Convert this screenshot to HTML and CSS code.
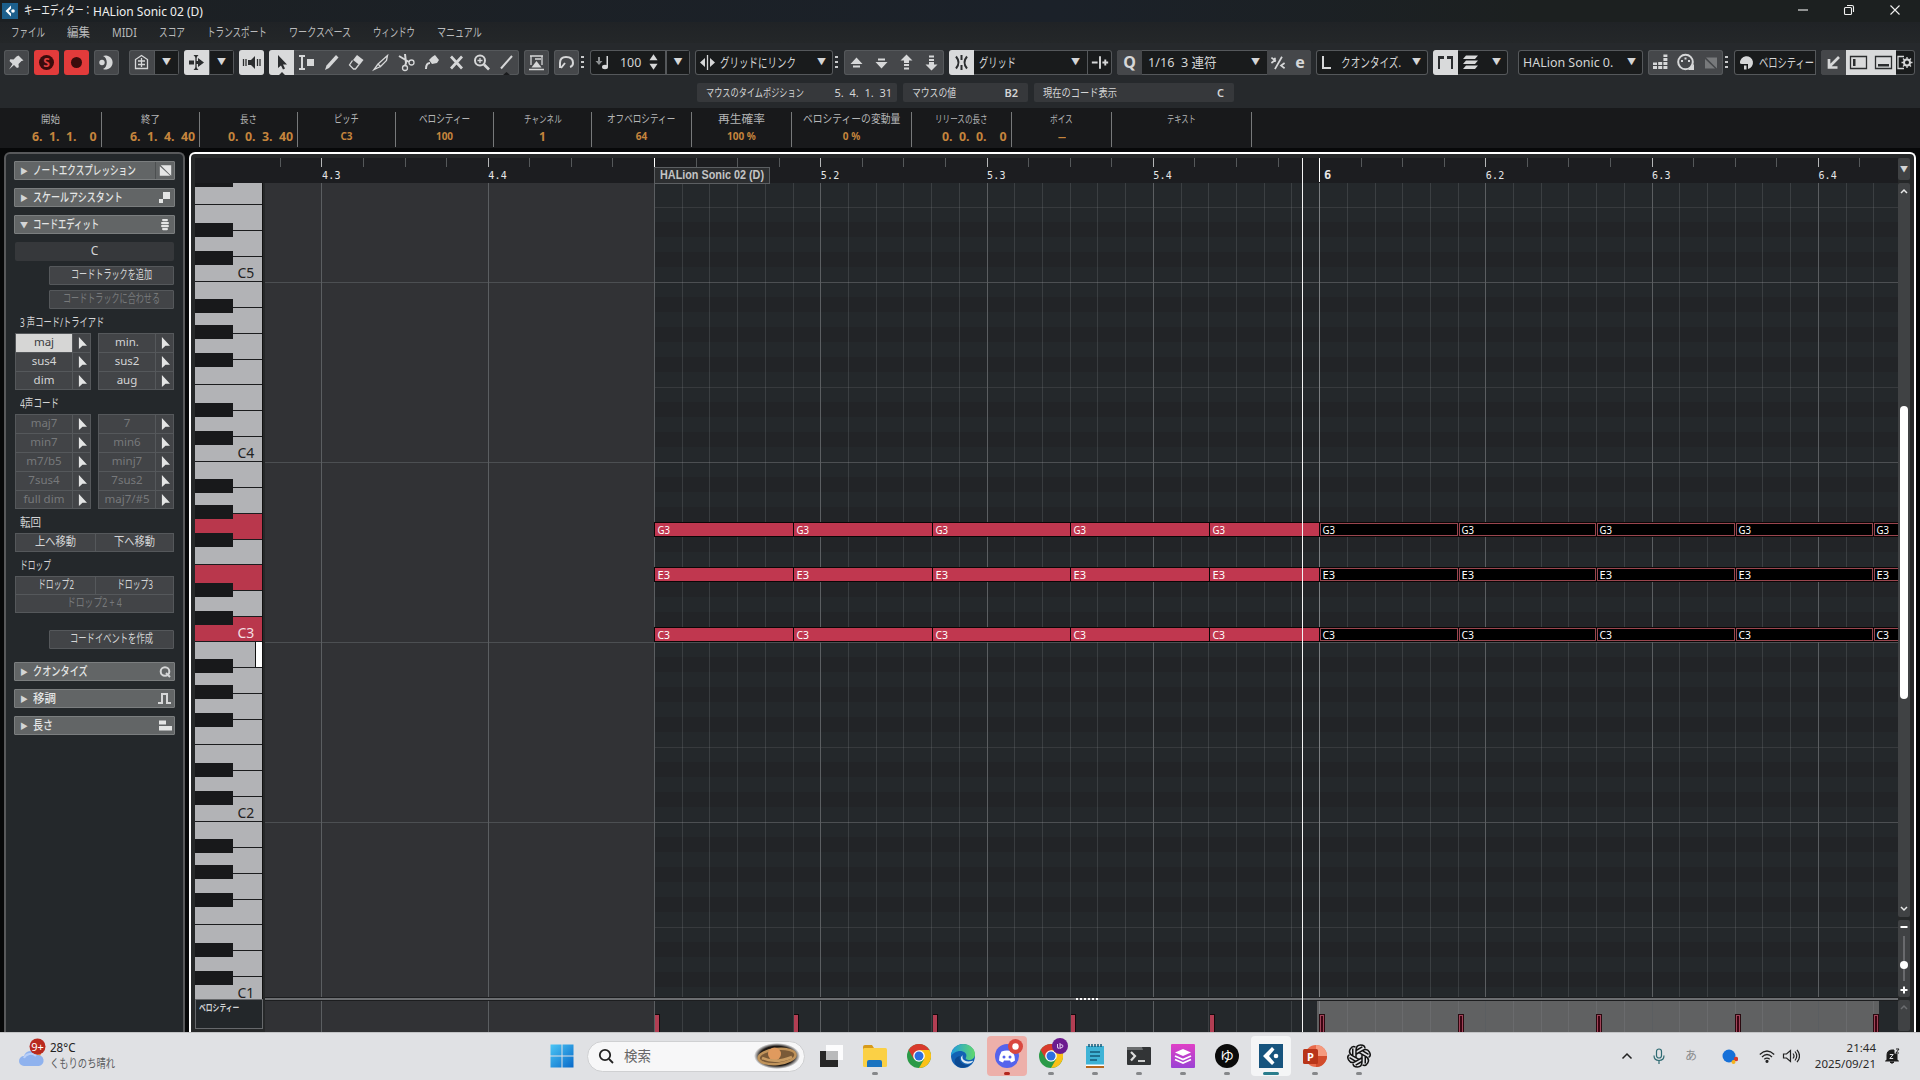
FILE: index.html
```html
<!DOCTYPE html>
<html lang="ja">
<head>
    <meta charset="UTF-8">
    <meta name="viewport" content="width=device-width, initial-scale=1.0">
    <title>キーエディター： HALion Sonic 02 (D)</title>
    <link rel="stylesheet" href="styles.css">
</head>
<body>

    <header class="titlebar">
        <svg class="app-icon" viewBox="0 0 16 16"><rect width="16" height="16" fill="#1c5f8c"/><path d="M9 2.500 3.500 8 9 13.500V10.500L6.500 8 9 5.500z" fill="#fff"/><circle cx="11" cy="8" r="1.800" fill="#fff"/></svg>
        <span data-w="68">キーエディター：</span>
        <span class="title-name" data-w="110">HALion Sonic 02 (D)</span>
        <div class="win-buttons">
            <svg viewBox="0 0 12 12"><path d="M1 6h10"/></svg>
            <svg viewBox="0 0 12 12"><rect x="1.500" y="3.500" width="7" height="7" rx="1"/><path d="M4 1.500h5q1.500 0 1.500 1.500v5"/></svg>
            <svg viewBox="0 0 12 12"><path d="M1.500 1.500l9 9M10.500 1.500l-9 9"/></svg>
        </div>
    </header>

    <nav class="menubar">
        <span data-w="34">ファイル</span>
        <span data-w="23">編集</span>
        <span data-w="25">MIDI</span>
        <span data-w="26">スコア</span>
        <span data-w="60">トランスポート</span>
        <span data-w="62">ワークスペース</span>
        <span data-w="42">ウィンドウ</span>
        <span data-w="45">マニュアル</span>
    </nav>

    <div class="toolbar">
        <div class="group g5"><i class="btn"><svg viewBox="0 0 25 25"><path d="M14.500 5.500l5 5-2 .5-3 3 .3 3.200-1.800.8-3-3L5 19.500l3.500-5.500-3-3 .8-1.800 3.200.3 3-3z"/></svg></i></div>
        <div class="group g5 red"><i class="btn"><svg viewBox="0 0 25 25"><circle cx="12.500" cy="12.500" r="7.500" fill="#3a0c0c"/><text x="12.500" y="17" text-anchor="middle" font-size="12" font-weight="bold" fill="#e04040">S</text></svg></i></div>
        <div class="group g5 red"><i class="btn"><svg viewBox="0 0 25 25"><circle cx="12.500" cy="12.500" r="5.500" fill="#3a0c0c"/></svg></i></div>
        <div class="group g10"><i class="btn"><svg viewBox="0 0 25 25"><path d="M9 6a7 7 0 1 1 0 13c5-2 5-11 0-13z"/><circle cx="8" cy="12.500" r="2.700"/></svg></i></div>
        <div class="group g5"><i class="btn"><svg viewBox="0 0 25 25"><path class="ln" d="M6.500 18.500v-9l6-4 6 4v9zM12.500 8v9M9 11h7M9 14.500h7"/></svg></i><i class="btn dark">▼</i></div>
        <div class="group g5"><i class="btn lit"><svg viewBox="0 0 25 25"><path d="M5 10.500h5v4H5zM14 8l6 4.500-6 4.500v-3h-2v-3h2z"/><path class="ln" d="M12 5v15"/><path d="M9.500 5h5L12 8zM9.500 20h5L12 17z"/></svg></i><i class="btn dark">▼</i></div>
        <div class="group g5"><i class="btn lit"><svg viewBox="0 0 25 25"><path d="M9 10h3l4-4v13l-4-4H9z"/><path class="ln" d="M4.500 9v7M7 9v7M18.500 9v7M21 9v7"/></svg></i></div>
        <div class="group g5">
            <i class="btn lit"><svg viewBox="0 0 25 25"><path d="M9 5v13l3-2.500 2 4 2-1-2-4h4zM10 25l3-3 3 3z"/></svg></i>
            <i class="btn"><svg viewBox="0 0 25 25"><path class="ln2" d="M5 6h6M8 6v13M5 19h6"/><path d="M13 9h7v7h-7z"/></svg></i>
            <i class="btn"><svg viewBox="0 0 25 25"><path d="M17 5l2.500 2.500L10 18l-4 2 1.500-4.500z"/></svg></i>
            <i class="btn"><svg viewBox="0 0 25 25"><path d="M13 5l6.500 5-4 5L9 10z"/><path class="ln" d="M8.500 10.500l-3 4.500 4 4h2l3.500-4.500"/></svg></i>
            <i class="btn"><svg viewBox="0 0 25 25"><path class="ln" d="M18.500 5.500L9 14l2.500 2.500 6-6zM9 14l-4 5.500 6.500-3"/></svg></i>
            <i class="btn"><svg viewBox="0 0 25 25"><path class="ln2" d="M5 6l10 6M11 4l1 9-1 3"/><circle class="ln" cx="17.500" cy="12.500" r="2.500"/><circle class="ln" cx="11" cy="18" r="2.500"/></svg></i>
            <i class="btn"><svg viewBox="0 0 25 25"><path d="M13 7l3-2 4 5-2 3-5 1-3-4z"/><path class="ln2" d="M11 13q-4 0-4 6"/></svg></i>
            <i class="btn"><svg viewBox="0 0 25 25"><path class="ln3" d="M7 6.500l11 12M18 6.500l-11 12"/></svg></i>
            <i class="btn"><svg viewBox="0 0 25 25"><circle class="ln2" cx="11" cy="10.500" r="5"/><path class="ln3" d="M15 14.500l5 5"/><path class="ln" d="M8.500 10.500h5M11 8v5"/></svg></i>
            <i class="btn"><svg viewBox="0 0 25 25"><path class="ln2" d="M18 6L7 18.500"/><path d="M9 25l3.500-3 3.500 3z" fill="#1a1b1d"/></svg></i>
        </div>
        <div class="group g5"><i class="btn"><svg viewBox="0 0 25 25"><path class="ln" d="M6 6h13M7 6v9M18 6v9M5 19.500h15M11 9h6"/><path d="M12.500 11l5 6.500h-10z"/></svg></i></div>
        <div class="group"><i class="btn"><svg viewBox="0 0 25 25"><path class="ln2" d="M6 18v-5q0-6 6-6 7 0 7 6 0 3-3 4M7 18l4-5"/></svg></i></div>
        <b class="dots g6"></b>
        <div class="group box g5 w100">
            <i class="btn"><svg viewBox="0 0 25 25"><path d="M16.500 6h1.500v11h-1.500z"/><ellipse cx="15" cy="17" rx="3" ry="2.200"/><path d="M8 7h2v4h2.500L9 15l-3.500-4H8z" fill="#8d9092"/></svg></i>
            <span class="num" data-w="21">100</span>
            <svg class="spin" viewBox="0 0 10 17"><path d="M5 0l4.500 6.500h-9zM5 17L.5 10.500h9z"/></svg><i class="btn dark sep">▼</i>
        </div>
        <div class="group box w138">
            <i class="btn"><svg viewBox="0 0 25 25"><path class="ln" d="M12.500 5v15"/><path d="M10 8v9l-5-4.500zM15 8v9l5-4.500z"/></svg></i>
            <span data-w="76">グリッドにリンク</span><i class="arrow">▼</i>
        </div>
        <b class="dots g6"></b>
        <div class="group g5">
            <i class="btn"><svg viewBox="0 0 25 25"><path d="M12.500 7.500l6 6.500h-12zM9 15.500h7v2H9z"/></svg></i>
            <i class="btn"><svg viewBox="0 0 25 25"><path d="M12.500 18.500L6.500 12h12zM9 8.500h7v2H9z"/></svg></i>
            <i class="btn"><svg viewBox="0 0 25 25"><path d="M12.500 4.500l6 6h-3.500V13h-5v-2.500H6.500zM10 14h5v2h-5zM10 17.500h5v2h-5z"/></svg></i>
            <i class="btn"><svg viewBox="0 0 25 25"><path d="M12.500 20.500l6-6h-3.500V12h-5v2.500H6.500zM10 9h5v2h-5zM10 5.500h5v2h-5z"/></svg></i>
        </div>
        <div class="group box g5 w163">
            <i class="btn lit"><svg viewBox="0 0 25 25"><path class="ln2" d="M12.500 5v5M12.500 15v5M7 6.500q5 6 0 12M18 6.500q-5 6 0 12"/></svg></i>
            <span class="pad5" data-w="37">グリッド</span><i class="arrow">▼</i>
            <i class="btn sep"><svg viewBox="0 0 25 25"><path class="ln2" d="M12.500 6v13M4 12.500h6M15 12.500h6M18 9.500v6"/></svg></i>
        </div>
        <div class="group box g5 w194">
            <i class="btn mid"><b class="q">Q</b></i><span class="pad6" data-w="69">1/16&nbsp; 3 連符</span><i class="arrow">▼</i>
            <i class="btn mid w22"><svg viewBox="0 0 25 25"><path class="ln2" d="M17 6L9 20M5 7l4 3-4 3M9 7v5M20 13l-4 3 4 3"/></svg></i><i class="btn mid w22"><b class="q">e</b></i>
        </div>
        <div class="group box g5 w113">
            <i class="btn"><svg viewBox="0 0 25 25"><path class="ln2" d="M7 6v12h8"/></svg></i><span data-w="60">クオンタイズ.</span><i class="arrow">▼</i>
        </div>
        <div class="group box g10 w75">
            <i class="btn lit"><svg viewBox="0 0 25 25"><path d="M5 6h6v3H7v10H5zM14 6h6v13h-2V9h-4z"/></svg></i>
            <i class="btn"><svg viewBox="0 0 25 25"><path d="M8 5.500h12l-3 3.500H5zM8 10.500h12L17 14H5zM8 15.500h12L17 19H5z"/></svg></i><i class="arrow">▼</i>
        </div>
        <div class="group box g5 w125"><span class="pad5" data-w="90">HALion Sonic 0.</span><i class="arrow">▼</i></div>
        <div class="group">
            <i class="btn"><svg viewBox="0 0 25 25"><path d="M5 16h4v3H5zM10.200 16h4v3h-4zM15.400 16h4v3h-4zM10.200 12h4v3h-4zM15.400 12h4v3h-4zM15.400 8h4v3h-4zM15.400 4.500h4v2.500h-4zM5 12.500h4V15H5z"/></svg></i>
            <i class="btn"><svg viewBox="0 0 25 25"><circle class="ln2" cx="12.500" cy="12" r="7.300"/><path d="M8 10h2v2H8zM11.500 7.500h2v2h-2zM15 10h2v2h-2zM15 20h6v-6z"/></svg></i>
            <i class="btn"><svg viewBox="0 0 25 25"><path class="dim" d="M8 7.500h11v11zM7 9v9.500h10z"/></svg></i>
        </div>
        <b class="dots g6"></b>
        <div class="group box open g5 w82">
            <i class="btn"><svg viewBox="0 0 25 25"><path d="M6 13a6.500 6.500 0 1 1 8 6v-5H8q-2 0-2-1zM10 15.500h2.500v4H10z"/></svg></i><span data-w="55">ベロシティー</span>
        </div>
        <div class="group box w94">
            <i class="btn mid"><svg viewBox="0 0 25 25"><path class="ln3" d="M18 7l-9 9M8 9v8.500h8.500"/></svg></i>
            <i class="btn lit"><svg viewBox="0 0 25 25"><path class="ln" d="M4.500 6.500h16v12h-16z"/><path d="M7 9h2.500v7H7z"/></svg></i>
            <i class="btn lit"><svg viewBox="0 0 25 25"><path class="ln" d="M4.500 6.500h16v12h-16z"/><path d="M7 14h11v2.500H7z"/></svg></i>
            <i class="btn w19"><svg viewBox="3 0 19 25"><path class="ln" d="M11 6.500H5v12h6"/><circle class="ln2" cx="14" cy="12.500" r="3"/><path class="ln" d="M14 7v2M14 16v2M8.500 12.500h2M17.500 12.500h2M10 8.500l1.500 1.500M18 8.500l-1.500 1.500M10 16.500l1.500-1.500M18 16.500L16.500 15"/></svg></i>
        </div>
    </div>

    <div class="status">
        <div class="cell c1"><span data-w="98">マウスのタイムポジション</span><span data-w="57">5.&nbsp; 4.&nbsp; 1.&nbsp; 31</span></div>
        <div class="cell c2"><span data-w="44">マウスの値</span><b>B2</b></div>
        <div class="cell c1"><span data-w="74">現在のコード表示</span><b>C</b></div>
    </div>

    <div class="infoline">
        <div class="info w101 time"><span class="s" data-w="19">開始</span><b data-w="65">6.&nbsp; 1.&nbsp; 1.&nbsp;&nbsp;&nbsp; 0</b></div>
        <div class="info w98 time"><span class="s" data-w="19">終了</span><b data-w="65">6.&nbsp; 1.&nbsp; 4.&nbsp; 40</b></div>
        <div class="info w98 time"><span class="s" data-w="17">長さ</span><b data-w="65">0.&nbsp; 0.&nbsp; 3.&nbsp; 40</b></div>
        <div class="info w98"><span data-w="25">ピッチ</span><b>C3</b></div>
        <div class="info w98"><span data-w="51">ベロシティー</span><b>100</b></div>
        <div class="info w98"><span class="s" data-w="38">チャンネル</span><b class="one">1</b></div>
        <div class="info w100"><span data-w="68">オフベロシティー</span><b>64</b></div>
        <div class="info w100"><span data-w="47">再生確率</span><b>100 %</b></div>
        <div class="info w120"><span data-w="97">ベロシティーの変動量</span><b>0 %</b></div>
        <div class="info w100 time"><span class="s" data-w="53">リリースの長さ</span><b data-w="65">0.&nbsp; 0.&nbsp; 0.&nbsp;&nbsp;&nbsp; 0</b></div>
        <div class="info w100"><span class="s" data-w="23">ボイス</span><b data-w="8">—</b></div>
        <div class="info w140"><span class="s" data-w="29">テキスト</span></div>
    </div>

    <main class="workspace">
        <aside class="inspector">
            <div class="section"><i>▶</i><b data-w="103">ノートエクスプレッション</b><svg class="cut" viewBox="0 0 20 17"><path d="M5 3h11v11zM4 4v10h11z"/></svg></div>
            <div class="section"><i>▶</i><b data-w="90">スケールアシスタント</b><svg viewBox="0 0 20 17"><path d="M8 3h7v7H8zM4 10h4v4H4z"/></svg></div>
            <div class="section"><i class="down">▼</i><b data-w="66">コードエディット</b><svg viewBox="0 0 20 17"><rect x="7" y="3" width="6" height="2.200" rx="1.100"/><rect x="6" y="6" width="8" height="2.200" rx="1.100"/><rect x="6" y="9" width="8" height="2.200" rx="1.100"/><rect x="7" y="12" width="6" height="2.200" rx="1.100"/></svg></div>

            <div class="chord-name">C</div>
            <div class="wide"><span data-w="81">コードトラックを追加</span></div>
            <div class="wide off"><span data-w="97">コードトラックに合わせる</span></div>

            <h4><span data-w="84">3 声コード/トライアド</span></h4>
            <div class="chords">
                <div class="chord on"><span>maj</span><i></i></div><div class="chord"><span>min.</span><i></i></div>
                <div class="chord"><span>sus4</span><i></i></div><div class="chord"><span>sus2</span><i></i></div>
                <div class="chord"><span>dim</span><i></i></div><div class="chord"><span>aug</span><i></i></div>
            </div>
            <h4><span data-w="39">4声コード</span></h4>
            <div class="chords off">
                <div class="chord"><span>maj7</span><i></i></div><div class="chord"><span>7</span><i></i></div>
                <div class="chord"><span>min7</span><i></i></div><div class="chord"><span>min6</span><i></i></div>
                <div class="chord"><span>m7/b5</span><i></i></div><div class="chord"><span>minj7</span><i></i></div>
                <div class="chord"><span>7sus4</span><i></i></div><div class="chord"><span>7sus2</span><i></i></div>
                <div class="chord"><span>full dim</span><i></i></div><div class="chord"><span>maj7/#5</span><i></i></div>
            </div>
            <h4><span data-w="21">転回</span></h4>
            <div class="pair"><div><span data-w="41">上へ移動</span></div><div><span data-w="41">下へ移動</span></div></div>
            <h4><span data-w="31">ドロップ</span></h4>
            <div class="pair"><div><span data-w="36">ドロップ2</span></div><div><span data-w="36">ドロップ3</span></div><div class="full"><span data-w="55">ドロップ2 + 4</span></div></div>
            <div class="wide create"><span data-w="83">コードイベントを作成</span></div>

            <div class="section"><i>▶</i><b data-w="55">クオンタイズ</b><svg viewBox="0 0 20 17"><circle class="ln2" cx="10" cy="8.500" r="4.300"/><path class="ln2" d="M11 10l4 4"/></svg></div>
            <div class="section"><i>▶</i><b data-w="23">移調</b><svg viewBox="0 0 20 17"><path class="ln2" d="M3 13h4V4h5v9h4"/></svg></div>
            <div class="section"><i>▶</i><b data-w="20">長さ</b><svg viewBox="0 0 20 17"><path d="M4 3.500h7v4H4zM4 9h13v4.500H4z"/></svg></div>
        </aside>

        <section class="editor">
            <div class="keys-col">
                <div class="ruler-pad"></div>
                <svg id="keys" class="keys" viewBox="195 183 68 816"></svg>
                <div class="lane-name"><span data-w="40">ベロシティー</span></div>
            </div>
            <svg id="roll" class="roll" viewBox="265 158 1633 874"></svg>
            <div class="scroll-col">
                <div class="sb menu">▼</div>
                <div class="sb track">
                    <svg viewBox="0 0 12 12"><path d="M3 8l3-3 3 3"/></svg>
                    <div class="thumb"></div>
                    <svg viewBox="0 0 12 12"><path d="M3 4l3 3 3-3"/></svg>
                </div>
                <div class="sb zoom"><svg viewBox="0 0 12 77"><path d="M6 16v45" stroke="#77797b"/><path d="M2.500 7h7M2.500 70h7M6 66.500v7" stroke="#fff" stroke-width="2"/><circle cx="6" cy="45" r="4" fill="#fff" stroke="none"/></svg></div>
                <div class="sb lane"><svg viewBox="0 0 12 12"><path d="M3 8l3-3 3 3" stroke="#6b6d70"/></svg></div>
            </div>
        </section>
    </main>

    <footer class="taskbar">
        <div class="weather">
            <svg viewBox="0 0 30 32"><circle cx="18" cy="15" r="5" fill="#e98a3a"/><path d="M6 28a5 5 0 0 1 0-10 7 7 0 0 1 13-1 5.500 5.500 0 0 1 2 11z" fill="#8fb2ee"/><path d="M6 20a7 6 0 0 1 12-2" fill="none" stroke="#b9cff7" stroke-width="2"/><circle cx="19.500" cy="8.500" r="8" fill="#b92a1f"/><text x="19.500" y="12.500" text-anchor="middle" font-size="11" fill="#fff">9+</text></svg>
            <div><p class="temp"><span data-w="25">28°C</span></p><p><span data-w="65">くもりのち晴れ</span></p></div>
        </div>

        <div class="apps">
            <i class="app start"><svg viewBox="0 0 24 24"><defs><linearGradient id="win" x1="0" y1="0" x2="1" y2="1"><stop offset="0" stop-color="#4cc6f5"/><stop offset="1" stop-color="#0869c9"/></linearGradient></defs><path fill="url(#win)" d="M.5.500h11v11H.5zM12.500.500h11v11h-11zM.5 12.500h11v11H.5zM12.500 12.500h11v11h-11z"/></svg></i>
            <div class="search">
                <svg viewBox="0 0 16 16"><circle cx="7" cy="7" r="5.200"/><path d="M11 11l4 4"/></svg><span>検索</span>
                <svg class="planet" viewBox="0 0 46 26"><defs><radialGradient id="sky"><stop offset=".75" stop-color="#1c1714"/><stop offset="1" stop-color="#1c1714" stop-opacity="0"/></radialGradient></defs><ellipse cx="23" cy="13" rx="23" ry="13" fill="url(#sky)"/><ellipse cx="23" cy="13.500" rx="18.500" ry="7.500" fill="#7a5a38" stroke="#c0935a" stroke-width="2.500" transform="rotate(-6 23 13)"/><circle cx="20.500" cy="11" r="6.500" fill="#e09a5e"/><path d="M8 15q13 6 30-1" fill="none" stroke="#c99c63" stroke-width="2.500"/></svg>
            </div>
            <i class="app"><svg viewBox="0 0 24 24"><path d="M1 7h18v16H1z" fill="#262626"/><path d="M7 1h17v15H7z" fill="#fff" opacity=".9"/><path d="M7 7h12v9H7z" fill="#b9babb"/></svg></i>
            <i class="app run"><svg viewBox="0 0 24 24"><path d="M0 3q0-2 2-2h7l2 3v5H0z" fill="#d79a1b"/><rect y="4" width="24" height="19" rx="1.500" fill="#fbd045"/><path d="M4 23v-5q0-2 2-2h11q2 0 2 2v5z" fill="#1a73c0"/></svg></i>
            <i class="app"><svg viewBox="0 0 24 24"><use href="#chrome"/></svg></i>
            <i class="app"><svg viewBox="0 0 24 24"><defs><linearGradient id="edge"><stop offset="0" stop-color="#1f9be0"/><stop offset="1" stop-color="#62d96b"/></linearGradient></defs><circle cx="12" cy="12" r="12" fill="#1362b4"/><path d="M0 12C0 5 6 0 12 0c7 0 12 5 12 10 0 4-3 6-6 6-2 0-4-1-3-2.500C17 9 12 6.500 8 7c-4 .5-7 3-8 5z" fill="url(#edge)"/><path d="M9 12c-2 6 4 11 11 8-4 4-10 5-14 2s-3-9 3-10z" fill="#0c4a92"/><path d="M12 11c-2 3 1 8 9 6 2-1 1 1-1 2-5 2-11-1-10-6z" fill="#dce9f2"/></svg></i>
            <i class="app run alert"><svg viewBox="0 0 24 24"><circle cx="12" cy="12" r="12" fill="#5563ec"/><path d="M6.500 7.500q5.500-2 11 0 2.500 4 2.500 9-2 1.500-4 2l-1-2H9l-1 2q-2-.5-4-2 0-5 2.500-9z" fill="#fff"/><circle cx="9" cy="13" r="1.500" fill="#5563ec"/><circle cx="15" cy="13" r="1.500" fill="#5563ec"/></svg><svg class="badge" viewBox="0 0 14 14"><circle cx="7" cy="7" r="7" fill="#d9473f"/><circle cx="7" cy="7" r="3" fill="#fff"/></svg></i>
            <i class="app run"><svg viewBox="0 0 24 24"><g id="chrome"><circle cx="12" cy="12" r="12" fill="#2b9a47"/><path d="M1.600 6A12 12 0 0 1 22.400 6L12 6.500 6.800 15z" fill="#d93a2c"/><path d="M22.400 6A12 12 0 0 1 12 24l5.200-9L12 6z" fill="#fbc116"/><circle cx="12" cy="12" r="5.800" fill="#fff"/><circle cx="12" cy="12" r="4.500" fill="#2d6fe0"/></g></svg><svg class="badge" viewBox="0 0 16 16"><circle cx="8" cy="8" r="8" fill="#6c1b8f"/><path d="M5.500 6v3q0 2 1.500 1M8 5v6M8 7q3-1 3 1t-3 2" fill="none" stroke="#e5cdf0"/></svg></i>
            <i class="app run"><svg viewBox="0 0 24 24"><rect x="3" y="2" width="18" height="21" fill="#3fb3d6"/><path d="M3 21h18v3H3z" fill="#b8681e"/><path d="M3 20.500h18V22H3z" fill="#fff"/><path d="M6 0v3M9 0v3M12 0v3M15 0v3M18 0v3M7 8h10M7 12h10M7 16h7" stroke="#155a78" stroke-width="1.500"/></svg></i>
            <i class="app run"><svg viewBox="0 0 24 24"><rect y="3" width="24" height="18" rx="1" fill="#323436"/><path d="M0 6V4q0-1 1-1h14l1 3z" fill="#6a6c6e"/><path d="M4 8l4 4-4 4.500" fill="none" stroke="#ddd" stroke-width="2.200"/><path d="M11 17h7" stroke="#fff" stroke-width="1.500"/></svg></i>
            <i class="app run"><svg viewBox="0 0 24 24"><defs><linearGradient id="lay" x2="0" y2="1"><stop offset="0" stop-color="#e040c6"/><stop offset="1" stop-color="#9a42d4"/></linearGradient></defs><rect width="24" height="24" rx="1" fill="url(#lay)"/><path d="M12 5l8 3.500-8 3.500-8-3.500z" fill="#fff"/><path d="M4 12l8 3.500 8-3.500M4 15.500L12 19l8-3.500" fill="none" stroke="#fff" stroke-width="1.800"/></svg></i>
            <i class="app run"><svg viewBox="0 0 24 24"><circle cx="12" cy="12" r="12" fill="#0b0b0b"/><text x="12" y="17" text-anchor="middle" font-size="14" fill="#fff">ゆ</text></svg></i>
            <i class="app run active"><svg viewBox="0 0 24 24"><rect width="24" height="24" fill="#17547e"/><path d="M13 3L4 12l9 9 2.500-2.500L10 12l5.500-6.500z" fill="#fff"/><circle cx="17" cy="12" r="2.300" fill="#fff"/></svg></i>
            <i class="app run"><svg viewBox="0 0 24 24"><circle cx="13" cy="12" r="11" fill="#e8694a"/><path d="M13 1a11 11 0 0 1 11 11H13z" fill="#f59a7e"/><path d="M13 23a11 11 0 0 0 11-11H13z" fill="#d24c2c"/><rect y="5" width="15" height="15" rx="1.500" fill="#b93519"/><text x="7.500" y="16.500" text-anchor="middle" font-size="11" font-weight="bold" fill="#fff">P</text></svg></i>
            <i class="app run"><svg viewBox="0 0 24 24"><g fill="none" stroke="#111" stroke-width="1.500"><path id="pt" d="M9 13.700V6.500Q9 1 13.500 1T18 4.500M9 6.500l6.300-3.600"/><use href="#pt" transform="rotate(60 12 12)"/><use href="#pt" transform="rotate(120 12 12)"/><use href="#pt" transform="rotate(180 12 12)"/><use href="#pt" transform="rotate(240 12 12)"/><use href="#pt" transform="rotate(300 12 12)"/></g></svg></i>
        </div>

        <div class="tray">
            <svg viewBox="0 0 16 16"><path d="M3.500 10.500L8 6l4.500 4.500" stroke-width="1.500"/></svg>
            <svg viewBox="0 0 16 16" class="mic"><rect x="5.500" y="1" width="5" height="9" rx="2.500"/><path d="M3 7.500q0 5 5 5t5-5M8 12.500V16"/></svg>
            <span class="ime">あ</span>
            <svg viewBox="0 0 16 16" class="ball"><circle cx="7" cy="8" r="6.500" fill="#1670d8" stroke="none"/><circle cx="14" cy="11" r="2.200" fill="#d83a2b" stroke="none"/><circle cx="11.500" cy="14" r="2" fill="#f5b31a" stroke="none"/></svg>
            <svg viewBox="0 0 16 16" class="wifi"><path d="M.8 6.500q7.200-7 14.400 0M3 9q5-5 10 0M5.300 11.300q2.700-2.500 5.400 0"/><circle cx="8" cy="13.300" r="1" fill="#222"/></svg>
            <svg viewBox="0 0 18 16" class="vol"><path d="M1.500 6h3L8.500 2.500v11L4.500 10h-3zM11 5.500q2 2.500 0 5M13 3.500q3.500 4.500 0 9M15 1.800q5 6.200 0 12.400"/></svg>
            <div class="clock"><p>21:44</p><p>2025/09/21</p></div>
            <svg viewBox="0 0 16 16" class="bell"><path d="M3 12V7q0-4.500 4.500-5H10v4h3v6l1.500 1H1.500zM6 14h4q-2 2.500-4 0z" fill="#1c1c1c"/><path d="M5.800 6.500h3.400l-3.400 4h3.400" stroke="#e0e1e4"/><path d="M12 1h3l-3 4h3"/></svg>
        </div>
    </footer>

    <script src="script.js"></script>
</body>
</html>
```
FILE: styles.css
```css
* {
    box-sizing: border-box;
}
body {
    margin: 0;
    width: 1920px;
    height: 1080px;
    overflow: hidden;
    background: #232629;
    color: #d4d5d6;
    font-family: "Noto Sans", "Noto Sans CJK JP", sans-serif;
    font-size: 12px;
    line-height: 16px;
    display: flex;
    flex-direction: column;
}
p, h4 {
    margin: 0;
    font-weight: normal;
}
i {
    font-style: normal;
}
svg {
    display: block;
}
[data-w] {
    display: inline-block;
    white-space: nowrap;
    transform-origin: 0 50%;
}

/* title + menu */
.titlebar {
    height: 22px;
    padding: 0 19px 0 2px;
    display: flex;
    align-items: center;
    background: linear-gradient(90deg, #1c2023, #1b2129 55%, #1c2020 80%);
    color: #f0f0f0;
}
.app-icon {
    width: 16px;
    height: 16px;
    margin: 0 6px 0 0;
}
.title-name {
    margin-left: 1px;
    font-size: 13px;
}
.win-buttons {
    margin-left: auto;
    display: flex;
    gap: 34px;
}
.win-buttons svg {
    width: 12px;
    height: 12px;
    margin-top: -3px;
    fill: none;
    stroke: #f0f0f0;
    stroke-width: 1.1;
}
.menubar {
    height: 21px;
    padding-left: 11px;
    display: flex;
    align-items: center;
    gap: 22px;
    background: linear-gradient(#202326, #242729);
    color: #b9babb;
}

/* toolbar */
.toolbar {
    height: 39px;
    padding: 0 0 1px 4px;
    display: flex;
    align-items: center;
    background: #26292c;
    flex: none;
    font-size: 13px;
}
.group {
    height: 25px;
    flex: none;
    display: flex;
    align-items: center;
    background: #45474a;
    border-radius: 3px;
    overflow: hidden;
    box-shadow: inset 0 0 0 1px #55585b;
}
.group.box {
    background: #191b1c;
}
.group.open {
    border-radius: 3px 0 0 3px;
}
.group.red {
    background: #e23b3b;
    box-shadow: none;
}
.g5 { margin-right: 5px; }
.g6 { margin-right: 6px; }
.g10 { margin-right: 10px; }
.w75 { width: 75px; }
.w82 { width: 82px; }
.w94 { width: 94px; }
.w98 { width: 98px; }
.w100 { width: 100px; }
.w101 { width: 102px; }
.w113 { width: 112px; }
.w120 { width: 120px; }
.w125 { width: 125px; }
.w138 { width: 138px; }
.w140 { width: 140px; }
.w163 { width: 163px; }
.w194 { width: 194px; }
.btn {
    width: 25px;
    height: 25px;
    flex: none;
    display: flex;
    align-items: center;
    justify-content: center;
    color: #d6d7d8;
    font-size: 9px;
}
.btn svg {
    width: 100%;
    height: 25px;
    fill: #d6d7d8;
}
.btn .dim {
    fill: #77797b;
}
.btn.w22 { width: 22px; }
.btn.w19 { width: 19px; }
.btn.dark {
    background: #191b1c;
    box-shadow: inset 0 0 0 1px #55585b;
}
.btn.mid {
    background: #45474a;
}
.btn.lit {
    background: #d9dadb;
}
.btn.lit svg {
    fill: #2b2d2f;
}
.sep {
    border-left: 1px solid #55585b;
}
.ln, .ln2, .ln3 {
    fill: none;
    stroke: #d6d7d8;
    stroke-width: 1.3;
}
.ln2 {
    stroke-width: 2;
}
.ln3 {
    stroke-width: 2.7;
}
.lit .ln, .lit .ln2 {
    stroke: #2b2d2f;
}
.q {
    font-size: 16px;
}
.num {
    margin-left: 5px;
}
.spin {
    width: 9px;
    height: 16px;
    margin: 0 auto;
    fill: #d6d7d8;
}
.arrow {
    margin-left: auto;
    padding-right: 7px;
    font-size: 9px;
}
.pad5 { margin-left: 5px; }
.pad6 { margin-left: 6px; }
.dots {
    width: 3px;
    height: 12px;
    flex: none;
    margin-left: 2px;
    background: repeating-linear-gradient(#c8c9ca 0 2px, transparent 2px 5px);
}

/* status line */
.status {
    height: 26px;
    flex: none;
    padding: 1px 0 0 697px;
    display: flex;
    gap: 6px;
    background: #26292c;
}
.cell {
    height: 19px;
    padding: 0 5px 0 9px;
    display: flex;
    align-items: center;
    justify-content: space-between;
    background: #36383b;
    border-radius: 2px;
    font-size: 11px;
}
.cell b {
    padding-right: 5px;
    font-weight: 600;
}
.c1 { width: 200px; }
.c2 { width: 125px; }

/* info line */
.infoline {
    height: 40px;
    flex: none;
    display: flex;
    background: #18191b;
    padding-top: 4px;
}
.info {
    height: 35px;
    border-right: 1px solid #77797a;
    display: flex;
    flex-direction: column;
    align-items: center;
    color: #b4b5b6;
    font-size: 11.5px;
}
.info span {
    line-height: 14px;
    height: 14px;
    margin-bottom: 3px;
}
.info .s {
    font-size: 10px;
}
.info b {
    color: #c5853d;
    font-size: 10px;
    line-height: 15px;
}
.info .one {
    font-size: 12px;
}
.info.time b {
    align-self: flex-end;
    font-size: 12px;
    margin-left: auto;
    position: relative;
    left: -4px;
}

/* workspace */
.workspace {
    height: 884px;
    flex: none;
    padding: 4px 4px 0;
    display: flex;
    gap: 4px;
    background: #070809;
}
.inspector {
    width: 181px;
    padding: 7px 8px 0 8px;
    border: 2px solid #58595b;
    border-bottom: 0;
    border-radius: 6px 6px 0 0;
    background: #24282b;
}
.section {
    width: 161px;
    height: 19px;
    margin-bottom: 8px;
    display: flex;
    align-items: center;
    background: #626566;
    border: 1px solid #7b7e7f;
    border-radius: 1px;
}
.section i {
    width: 18px;
    padding-left: 5px;
    font-size: 8px;
}
.section b {
    font-size: 12px;
    font-weight: 500;
    color: #e4e5e5;
}
.section svg {
    width: 20px;
    height: 17px;
    margin-left: auto;
    margin-right: -1px;
    fill: #e4e5e5;
}
.section .cut {
    border-left: 1px solid #4c4f50;
}
.chord-name {
    width: 159px;
    height: 19px;
    margin: 0 0 5px 1px;
    background: #36383b;
    border-radius: 2px;
    text-align: center;
    line-height: 18px;
}
.wide {
    width: 125px;
    height: 19px;
    margin: 0 0 5px 35px;
    background: #424447;
    border: 1px solid #55585b;
    border-radius: 1px;
    text-align: center;
    line-height: 16px;
}
.off, .off span {
    color: #77797b;
}
.create {
    margin: 17px 0 13px 35px;
}
.inspector h4 {
    height: 24px;
    padding: 6px 0 0 6px;
    line-height: 16px;
}
.wide + h4 {
    height: 19px;
    padding-top: 1px;
}
.chords {
    width: 159px;
    margin-left: 1px;
    display: grid;
    grid-template-columns: 76px 76px;
    column-gap: 7px;
}
.chord {
    height: 19px;
    display: flex;
    background: #424447;
    border: 1px solid #55585b;
    border-bottom: 0;
    text-align: center;
    font-size: 11.5px;
    line-height: 16px;
}
.chord:nth-last-child(-n+2) {
    border-bottom: 1px solid #55585b;
}
.chord span {
    width: 57px;
    border-right: 1px solid #55585b;
}
.chord.on span {
    background: #d6d6d5;
    color: #3a3c3e;
}
.chord i {
    width: 9px;
    height: 12px;
    margin: 3px 0 0 5px;
    background: #e4e5e5;
    clip-path: polygon(10% 0, 100% 72%, 50% 72%, 10% 100%);
}
.pair {
    width: 159px;
    margin-left: 1px;
    display: grid;
    grid-template-columns: 80px 78px;
    border: 1px solid #55585b;
    border-width: 1px 0 0 1px;
    background: #424447;
    text-align: center;
    line-height: 15px;
}
.pair div {
    height: 18px;
    border: 1px solid #55585b;
    border-width: 0 1px 1px 0;
}
.pair .full {
    grid-column: span 2;
    color: #77797b;
}

.editor {
    width: 1727px;
    padding: 4px 0 0 4px;
    display: flex;
    border: 2px solid #fff;
    border-bottom: 0;
    border-radius: 6px 6px 0 0;
    background: #262829;
}
.keys-col {
    width: 70px;
    flex: none;
}
.ruler-pad {
    height: 25px;
    background: #1c1d20;
}
.keys {
    width: 68px;
    height: 816px;
}
.lane-name {
    width: 68px;
    height: 30px;
    padding-left: 3px;
    border: 1px solid #66686b;
    background: #23272a;
    font-size: 9px;
    font-weight: 600;
}
.roll {
    width: 1633px;
    height: 874px;
    flex: none;
}
.note-text {
    font: 10.5px "Noto Sans", sans-serif;
    fill: #fff;
}
.ruler-text {
    font: 10px "DejaVu Sans Mono", monospace;
    fill: #e6e6e6;
}
.key-text {
    font: 14px "Noto Sans", sans-serif;
    fill: #222;
}
.part-text {
    font: bold 12px "Liberation Sans", sans-serif;
    fill: #c3c4c4;
}
.scroll-col {
    width: 12px;
    display: flex;
    flex-direction: column;
    gap: 3px;
}
.sb {
    width: 12px;
    background: #404244;
    border-radius: 2px;
}
.sb svg {
    width: 12px;
    fill: none;
    stroke: #e8e8e8;
    stroke-width: 1.5;
}
.menu {
    height: 22px;
    font-size: 8px;
    line-height: 22px;
    text-align: center;
}
.track {
    height: 734px;
    display: flex;
    flex-direction: column;
    justify-content: space-between;
    padding: 2px 0;
}
.thumb {
    width: 8px;
    height: 293px;
    margin: 0 2px;
    border-radius: 4px;
    background: #fff;
    transform: translateY(2px);
}
.zoom {
    height: 77px;
}
.lane {
    height: 31px;
    padding-top: 1px;
}

/* taskbar */
.taskbar {
    height: 48px;
    flex: none;
    display: flex;
    align-items: center;
    position: relative;
    padding-bottom: 1px;
    background: #e0e1e4;
    border-top: 1px solid #c3c4c6;
    color: #2a2a2a;
}
.weather {
    width: 550px;
    padding-left: 18px;
    display: flex;
    align-items: center;
    gap: 2px;
    color: #5a5c5e;
}
.weather svg {
    width: 30px;
    height: 32px;
    margin-top: -5px;
}
.temp {
    color: #222;
}
.apps {
    display: flex;
    align-items: center;
}
.app {
    width: 44px;
    height: 40px;
    display: flex;
    align-items: center;
    justify-content: center;
    position: relative;
    border-radius: 4px;
}
.app > svg {
    width: 24px;
    height: 24px;
}
.app.start {
    width: 37px;
    justify-content: flex-start;
}
.app.run::after {
    content: "";
    position: absolute;
    bottom: 1px;
    width: 6px;
    height: 3px;
    border-radius: 2px;
    background: #85878a;
}
.app.alert, .app.active {
    width: 40px;
    margin: 0 2px;
}
.app.alert {
    background: #edb0aa;
}
.app.alert::after {
    background: #b3261e;
}
.app.active {
    background: #f4f5f6;
}
.app.active::after {
    width: 16px;
    background: #2a7d8c;
}
.app .badge {
    position: absolute;
    top: 3px;
    right: 4px;
    width: 15px;
    height: 15px;
}
.app:not(.alert) .badge {
    right: 5px;
    top: 2px;
    width: 16px;
    height: 16px;
}
.search {
    width: 218px;
    height: 31px;
    margin-right: 4px;
    padding: 0 4px 0 10px;
    display: flex;
    align-items: center;
    background: #f7f7f8;
    border: 1px solid #cfd0d2;
    border-radius: 16px;
    color: #666;
    font-size: 13.500px;
}
.search svg {
    width: 16px;
    height: 16px;
    margin-right: 10px;
    fill: none;
    stroke: #222;
    stroke-width: 1.8;
}
.search .planet {
    width: 46px;
    height: 26px;
    margin: 0 0 0 auto;
    stroke: none;
}
.tray {
    margin-left: auto;
    padding-right: 20px;
    display: flex;
    align-items: center;
}
.tray svg {
    width: 16px;
    height: 16px;
    fill: none;
    stroke: #222;
    stroke-width: 1.2;
}
.tray .mic {
    margin: 0 18px 0 16px;
    stroke: #2d6a72;
}
.ime {
    width: 14px;
    font-size: 12px;
    color: #8b8d8f;
}
.tray .ball {
    margin: 0 21px 0 23px;
}
.tray .vol {
    width: 18px;
    margin-left: 7px;
}
.clock {
    width: 76px;
    text-align: right;
    font-size: 11.5px;
}
.tray .bell {
    margin-left: 8px;
    stroke-width: 1;
    stroke: #1c1c1c;
}
```
FILE: script.js
```js
document.querySelectorAll("[data-w]").forEach(el => {
    const natural = el.offsetWidth;
    const target = Number(el.dataset.w);
    el.style.transform = `scaleX(${target / natural})`;
    el.style.marginRight = `${target - natural}px`;
});

const rect = (x, y, w, h, fill, extra = "") =>
    `<rect x="${x}" y="${y}" width="${w}" height="${h}" fill="${fill}" ${extra}/>`;
const text = (x, y, cls, str, extra = "") =>
    `<text x="${x}" y="${y}" class="${cls}" ${extra}>${str}</text>`;

const OCTAVE = 180;
const BEAT = 166.27;
const BAR5 = 654;

// keyboard
let keys = rect(195, 183, 68, 816, "#b2b3b6");
const whites = [26, 52, 78, 103, 129, 155, 180];
const blacks = [17.5, 43.5, 71.5, 121.5, 149.5];
keys += rect(195, 513, 67, 26, "#b9374c") + rect(195, 565, 67, 26, "#b9374c") + rect(195, 616, 67, 25, "#b9374c");
for (let oct = 0; oct < 5; oct++) {
    const top = 101 + oct * OCTAVE;
    whites.forEach(w => keys += rect(195, top + w, 67, 1, "#1b1c1e"));
    blacks.forEach(b => keys += rect(195, top + Math.round(b), 38, 14, "#18191b"));
    keys += text(237.5, top + 177, "key-text", "C" + (5 - oct), oct === 2 ? 'style="fill:#f3dfe2"' : "");
}
keys += rect(255, 642, 7, 25, "#fff") + rect(255, 642, 1, 25, "#111") + rect(262, 183, 1, 816, "#111");
document.getElementById("keys").innerHTML = keys;

// piano roll background
let roll = rect(265, 158, 1633, 25, "#1c1d20");
roll += rect(265, 183, 389, 849, "#313235") + rect(BAR5, 183, 1244, 849, "#24282b");
for (let oct = 0; oct < 5; oct++) {
    const top = 102 + oct * OCTAVE;
    [1, 3, 5, 8, 10].forEach(row => {
        const y = top + row * 15;
        if (y > 183 && y < 985) roll += rect(BAR5, y, 1244, 15, "#222427");
    });
    roll += rect(BAR5, top + 105, 1244, 1, "#373a3d");
    if (top > 183) roll += rect(265, top, 1633, 1, "#4c4f52");
}
// selected range in the velocity lane
roll += rect(1317, 1001, 562, 31, "#606162");

for (let i = 0; i < 45; i++) {
    const x = Math.round(BAR5 + i * BEAT / 6);
    if (i % 6 && x < 1898) roll += rect(x, 183, 1, 849, "#8c9094", 'opacity=".22"');
}
for (let i = -2; i < 8; i++) {
    const x = Math.round(BAR5 + i * BEAT);
    roll += rect(x, 183, 1, 849, i === 4 ? "#7a7d80" : "#5b5e61");
}
for (let i = -9; i < 30; i++) {
    const x = Math.round(BAR5 + i * BEAT / 4);
    roll += rect(x, 158, 1, 9, i % 4 ? "#55585a" : "#b5b6b7");
}
roll += rect(1319, 158, 1, 24, "#fff") + rect(BAR5, 158, 1, 10, "#fff");

["4.3", "4.4", "", "5.2", "5.3", "5.4", "", "6.2", "6.3", "6.4"].forEach((label, i) => {
    if (label) roll += text(BAR5 + 0.5 + (i - 2) * BEAT, 179, "ruler-text", label, 'textLength="18.500"');
});
roll += text(1324, 179, "ruler-text", "6", 'style="font-weight:bold;font-size:12px"');
roll += `<rect x="654.5" y="167.5" width="115" height="16" fill="#2c2e30" stroke="#5c5f62"/>`;
roll += text(660, 179, "part-text", "HALion Sonic 02 (D)", 'textLength="104" lengthAdjust="spacingAndGlyphs"');

// notes and their velocities
const starts = [654, 793, 932, 1070, 1209, 1319, 1458, 1596, 1735, 1873, 1990];
const pitches = [["G3", 522], ["E3", 567], ["C3", 627]];
for (let n = 0; n < 10; n++) {
    const x = starts[n];
    const w = starts[n + 1] - x;
    pitches.forEach(([name, y]) => {
        roll += rect(x, y, w, 15, "#0b0606");
        if (n < 5) roll += rect(x + 1, y + 1, w - 1, 13, "#c0374f");
        else roll += `<rect x="${x + 1.5}" y="${y + 1.5}" width="${w - 2}" height="12" fill="#000" stroke="#9a464f"/>`;
        roll += text(x + 3.5, y + 12, "note-text", name, 'textLength="12.500" lengthAdjust="spacingAndGlyphs"');
    });
    if (n < 5) roll += rect(x + 1, 1014, 5, 18, "#140a0c") + rect(x + 1, 1015, 4, 17, "#b23e53");
    else roll += rect(x, 1014, 6, 18, "#2a0a10") + `<rect x="${x + 1.5}" y="1015.5" width="3" height="20" fill="#3c0512" stroke="#a04459"/>`;
}

// lane divider with drag handle, playhead
roll += rect(265, 997, 1633, 4, "#1c1d1f") + rect(265, 998, 1633, 2, "#6c6e71");
for (let i = 0; i < 6; i++) roll += rect(1076 + i * 4, 998, 2, 2, "#fff");
roll += rect(1302, 158, 1, 874, "#f4f4f4");
document.getElementById("roll").innerHTML = roll;
```
